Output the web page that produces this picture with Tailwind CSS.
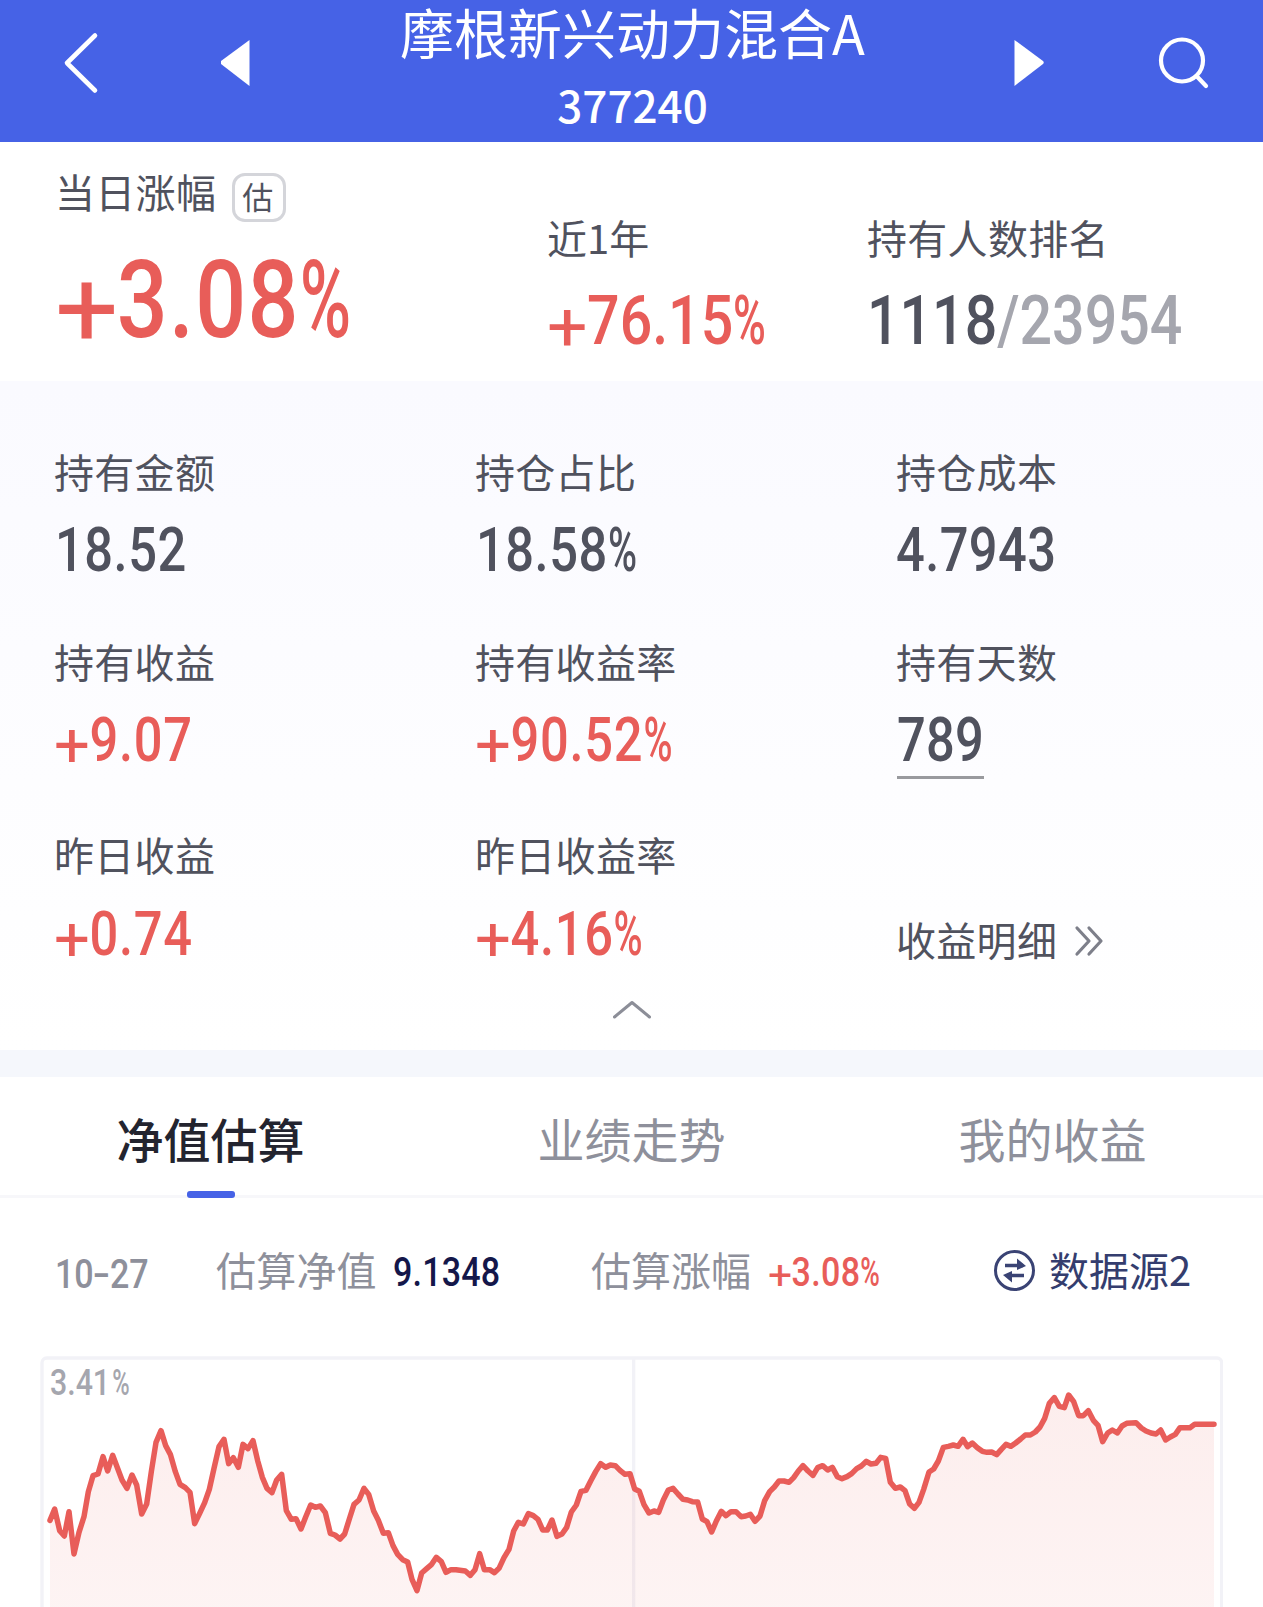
<!DOCTYPE html>
<html lang="zh-CN">
<head>
<meta charset="utf-8">
<title>摩根新兴动力混合A</title>
<script src="https://cdn.jsdelivr.net/npm/@tailwindcss/browser@4"></script>
</head>
<body class="h-[1607px] w-[1263px] overflow-hidden bg-white font-['Noto_Sans_CJK_SC',sans-serif] text-[40px] leading-[40px] text-[#50525e]">

<header class="flex h-[142px] items-start justify-between bg-[#4662e6] text-white">
  <div class="flex w-[400px] gap-[122px] pt-[31px] pl-[63px]">
    <svg class="h-[64px] w-[36px]" viewBox="0 0 36 64" fill="none" stroke="white" stroke-width="4.6" stroke-linecap="round" stroke-linejoin="round"><path d="M32 4.500 4 32 32 59.500"/></svg>
    <svg class="h-[64px] w-[30px]" viewBox="0 0 30 64" fill="white"><path d="M28.500 9v46L0 33q-1.500-1.500 0-3z"/></svg>
  </div>
  <div class="pl-[2px] text-center">
    <h1 class="h-[63px] text-[54px] leading-[63px] whitespace-nowrap">摩根新兴动力混合A</h1>
    <div class="mt-[11px] text-[44px] leading-[60px] font-medium">377240</div>
  </div>
  <div class="flex w-[400px] justify-end gap-[112px] pt-[31px] pr-[52px]">
    <svg class="h-[64px] w-[32px]" viewBox="0 0 32 64" fill="white"><path d="M1.500 9v46L30 33q1.500-1.500 0-3z"/></svg>
    <svg class="h-[64px] w-[54px]" viewBox="0 0 54 64" fill="none" stroke="white" stroke-width="4.200" stroke-linecap="round"><circle cx="25" cy="29.500" r="21"/><path d="M39.500 45l9.500 10"/></svg>
  </div>
</header>

<section class="flex h-[239px]">
  <div class="w-[493px] pt-[29px] pl-[55px]">
    <div class="flex h-[51px] gap-[16px]">
      <span class="tracking-[.3px]">当日涨幅</span>
      <span class="mt-[2px] flex h-[49px] w-[54px] justify-center rounded-[13px] border-3 border-[#d4d5da] pr-[3px] text-[31px] leading-[39px]">估</span>
    </div>
    <div class="mt-[28px] w-max origin-left scale-x-[.83] font-['Roboto'] text-[108px] leading-[100px] font-medium tracking-[.014em] text-[#e85d59]"><span class="inline-block w-[.69em] origin-left translate-y-[.08em] scale-x-125 font-normal">+</span>3.08<span class="inline-block origin-left scale-x-[.78]">%</span></div>
  </div>
  <div class="w-[373px] pt-[75px] pl-[54px]">
    <div>近1年</div>
    <div class="mt-[34px] w-max origin-left scale-x-[.83] font-['Roboto'] text-[69px] leading-[60px] font-medium text-[#e85d59]"><span class="inline-block w-[.7em] origin-left translate-y-[.08em] scale-x-125 font-normal">+</span>76.15<span class="inline-block origin-left scale-x-[.78]">%</span></div>
  </div>
  <div class="pt-[75px]">
    <div class="pl-[1px] tracking-[.3px]">持有人数排名</div>
    <div class="mt-[34px] ml-[1px] w-max origin-left scale-x-[.83] font-['Roboto'] text-[69px] leading-[60px] font-medium">1118<span class="text-[#a5a6ae]">/23954</span></div>
  </div>
</section>

<section class="h-[669px] bg-linear-to-b from-[#fafaff] to-white pt-[70px]">
  <div class="grid grid-cols-3 grid-rows-[190px_193px_136px] tracking-[.3px]">
    <div class="pl-[54px]">
      <div>持有金额</div>
      <div class="mt-[29px] ml-[1px] w-max origin-left scale-x-[.83] font-['Roboto'] text-[61px] leading-[60px] font-medium tracking-[.01em]">18.52</div>
    </div>
    <div class="pl-[54px]">
      <div>持仓占比</div>
      <div class="mt-[29px] ml-[1px] w-max origin-left scale-x-[.83] font-['Roboto'] text-[61px] leading-[60px] font-medium tracking-[.01em]">18.58<span class="inline-block origin-left scale-x-[.78]">%</span></div>
    </div>
    <div class="pl-[54px]">
      <div>持仓成本</div>
      <div class="mt-[29px] w-max origin-left scale-x-[.83] font-['Roboto'] text-[61px] leading-[60px] font-medium tracking-[.008em]">4.7943</div>
    </div>
    <div class="pl-[54px]">
      <div>持有收益</div>
      <div class="mt-[29px] w-max origin-left scale-x-[.83] font-['Roboto'] text-[61px] leading-[60px] font-medium tracking-[.014em] text-[#e85d59]"><span class="inline-block w-[.7em] origin-left translate-y-[.08em] scale-x-125 font-normal">+</span>9.07</div>
    </div>
    <div class="pl-[54px]">
      <div>持有收益率</div>
      <div class="mt-[29px] w-max origin-left scale-x-[.83] font-['Roboto'] text-[61px] leading-[60px] font-medium tracking-[.014em] text-[#e85d59]"><span class="inline-block w-[.7em] origin-left translate-y-[.08em] scale-x-125 font-normal">+</span>90.52<span class="inline-block origin-left scale-x-[.78]">%</span></div>
    </div>
    <div class="pl-[54px]">
      <div>持有天数</div>
      <div class="mt-[29px] ml-px h-[69px] w-[87px] border-b-3 border-[#999a9e]"><div class="w-max origin-left scale-x-[.83] font-['Roboto'] text-[61px] leading-[60px] font-medium">789</div></div>
    </div>
    <div class="pl-[54px]">
      <div>昨日收益</div>
      <div class="mt-[30px] w-max origin-left scale-x-[.83] font-['Roboto'] text-[61px] leading-[60px] font-medium tracking-[.014em] text-[#e85d59]"><span class="inline-block w-[.7em] origin-left translate-y-[.08em] scale-x-125 font-normal">+</span>0.74</div>
    </div>
    <div class="pl-[54px]">
      <div>昨日收益率</div>
      <div class="mt-[30px] w-max origin-left scale-x-[.83] font-['Roboto'] text-[61px] leading-[60px] font-medium tracking-[.014em] text-[#e85d59]"><span class="inline-block w-[.7em] origin-left translate-y-[.08em] scale-x-125 font-normal">+</span>4.16<span class="inline-block origin-left scale-x-[.78]">%</span></div>
    </div>
    <div class="flex gap-[17px] pt-[85px] pl-[54px]">
      <span>收益明细</span>
      <svg class="mt-[6px] h-[32px] w-[30px]" viewBox="0 0 30 32" fill="none" stroke="#7d7f8a" stroke-width="3.2" stroke-linecap="round" stroke-linejoin="round"><path d="M3 3l12 13L3 29M15 3l12 13-12 13"/></svg>
    </div>
  </div>
  <svg class="mx-auto mt-[29px] h-[22px] w-[40px]" viewBox="0 0 40 22" fill="none" stroke="#8c8e98" stroke-width="3" stroke-linecap="round" stroke-linejoin="round"><path d="M2.500 18 20 3.500 37.500 18"/></svg>
</section>

<div class="h-[27px] bg-[#f5f7fc]"></div>

<nav class="grid h-[121px] grid-cols-3 border-b-3 border-[#f7f7fa] pt-[31px] text-center text-[47px] leading-[60px] text-[#8e909b]">
  <div class="font-medium text-[#23242f]">净值估算<div class="mx-auto mt-[23px] h-[7px] w-[48px] rounded-[3px] bg-[#4662e6]"></div></div>
  <div>业绩走势</div>
  <div>我的收益</div>
</nav>

<section class="flex h-[158px] items-start pt-[51px] pl-[54px] text-[#8e909b]">
  <div class="w-[162px]"><div class="mt-[5px] ml-[1px] w-max origin-left scale-x-[.83] font-['Roboto'] text-[41px] font-medium">10<span class="mx-[.07em] inline-block scale-x-150">-</span>27</div></div>
  <div class="w-[177px] tracking-[.2px]">估算净值</div>
  <div class="w-[198px]"><div class="mt-[3px] w-max origin-left scale-x-[.83] font-['Roboto'] text-[41px] font-medium tracking-[.006em] text-[#14174a]">9.1348</div></div>
  <div class="w-[177px]">估算涨幅</div>
  <div class="w-[225px]"><div class="mt-[3px] w-max origin-left scale-x-[.83] font-['Roboto'] text-[41px] font-medium tracking-[.01em] text-[#e85d59]"><span class="inline-block w-[.69em] origin-left translate-y-[.08em] scale-x-125 font-normal">+</span>3.08<span class="inline-block origin-left scale-x-[.78]">%</span></div></div>
  <svg class="h-[43px] w-[43px]" viewBox="0 0 43 43" fill="none" stroke="#3a4374" stroke-width="3"><circle cx="21.500" cy="21.500" r="19"/><path d="M12 16.500h18M31 26.500H14" stroke-width="3.4"/><path d="M24 9.500l9 7.500-9 4zM19 33.500l-9-7.500 9-4z" fill="#3a4374" stroke="none"/></svg>
  <div class="ml-[13px] text-[#343d6e]">数据源2</div>
</section>

<section class="relative ml-[40px] h-[251px] w-[1183px]">
  <svg class="h-[251px] w-[1183px]" viewBox="30 48 3549 753" fill="none">
    <defs>
      <linearGradient id="area" x1="0" y1="165" x2="0" y2="801" gradientUnits="userSpaceOnUse"><stop stop-color="#e85d59" stop-opacity=".11"/><stop offset="1" stop-color="#e85d59" stop-opacity=".07"/></linearGradient>
    </defs>
    <rect x="36" y="54" width="3539" height="900" rx="14" stroke="#f2f2f7" stroke-width="10"/>
    <path d="M1811 54V801" stroke="#f2f2f7" stroke-width="10"/>
    <path id="fill" fill="url(#area)"/>
    <path id="trend" stroke="#e85d59" stroke-width="16.5" stroke-linejoin="round" stroke-linecap="round"/>
  </svg>
  <div class="absolute top-[9px] left-[10px] w-max origin-left scale-x-[.83] font-['Roboto'] text-[36.500px] leading-[36px] font-medium text-[#a5a6ae]">3.41<span class="ml-[.08em] inline-block origin-left scale-x-[.78]">%</span></div>
</section>

<script>
  // Intraday estimate, one x,y pair per tick
  const points = "60,541 74,507 89,572 103,588 117,515 132,642 147,577 162,530 175,455 189,407 204,402 219,350 233,393 248,346 276,420 291,445 306,405 320,435 335,522 350,492 364,395 378,307 393,272 407,317 421,343 436,395 450,433 466,443 480,457 494,551 509,520 524,488 538,448 552,385 567,320 582,298 596,371 610,353 625,382 639,313 654,326 669,302 683,362 697,412 711,445 726,458 740,420 755,403 769,512 784,538 798,536 813,567 827,531 842,495 856,502 871,498 886,518 901,580 915,585 930,597 944,582 958,537 972,493 987,480 1002,445 1016,463 1031,513 1045,541 1060,580 1075,578 1089,617 1103,643 1118,659 1133,666 1146,718 1161,752 1175,699 1190,686 1205,673 1219,652 1234,665 1248,697 1263,689 1278,689 1306,693 1321,706 1335,689 1349,641 1363,689 1379,689 1393,698 1407,685 1422,653 1437,628 1451,573 1465,547 1480,552 1495,521 1510,527 1524,538 1538,570 1552,570 1566,540 1581,589 1596,582 1610,562 1624,516 1639,495 1653,454 1668,451 1682,423 1697,395 1712,371 1727,382 1741,375 1756,377 1770,391 1785,403 1800,401 1814,447 1828,454 1842,494 1857,519 1872,513 1886,517 1900,480 1915,450 1929,445 1944,462 1959,478 1973,480 1987,485 2003,486 2017,537 2031,545 2045,576 2059,543 2074,514 2088,527 2103,515 2118,515 2133,530 2147,528 2161,523 2175,544 2190,528 2204,482 2219,455 2233,441 2247,423 2262,423 2277,427 2291,413 2305,393 2319,377 2334,393 2349,406 2363,383 2378,377 2393,390 2407,382 2422,410 2436,416 2451,410 2465,401 2480,386 2494,378 2509,364 2523,372 2538,370 2552,352 2567,355 2581,427 2596,445 2611,441 2625,452 2639,492 2653,505 2667,487 2681,448 2697,396 2711,387 2725,363 2740,322 2755,319 2770,315 2784,319 2799,298 2813,320 2827,309 2842,323 2857,334 2871,337 2885,336 2900,344 2914,328 2928,313 2943,319 2957,309 2972,297 2986,285 3001,285 3016,276 3030,261 3044,235 3058,190 3073,173 3088,199 3103,203 3116,165 3131,185 3146,227 3160,227 3175,212 3190,241 3204,256 3218,305 3233,279 3247,270 3262,279 3276,258 3290,250 3318,248 3334,264 3348,273 3363,279 3378,282 3392,270 3407,300 3421,291 3436,283 3450,263 3480,263 3494,253 3552,253";
  document.getElementById("trend").setAttribute("d", "M" + points);
  document.getElementById("fill").setAttribute("d", "M" + points + "V801H60z");
</script>
</body>
</html>
